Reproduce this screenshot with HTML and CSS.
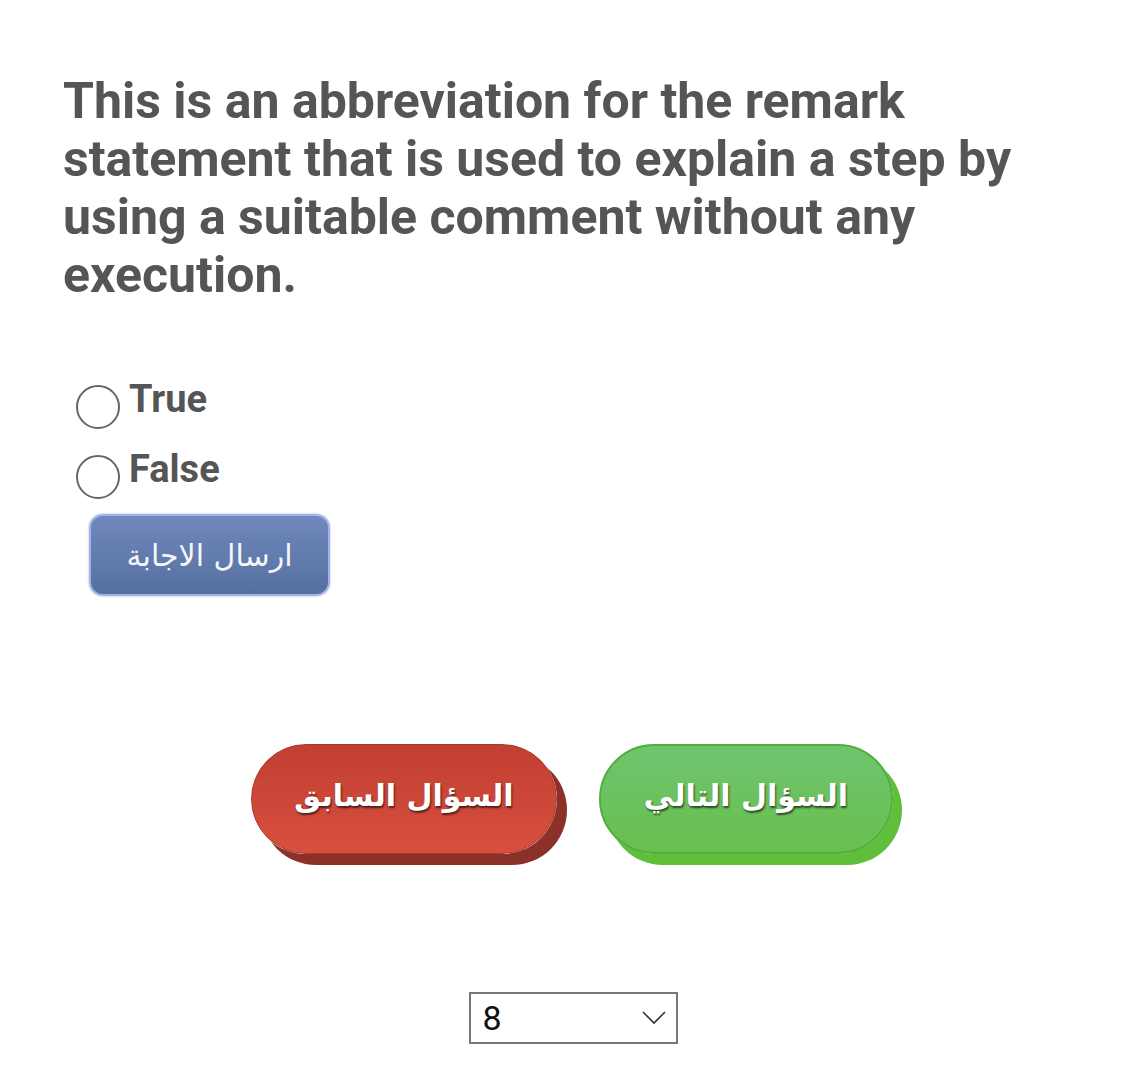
FILE: index.html
```html
<!DOCTYPE html>
<html lang="en">

<head>
 <meta charset="UTF-8">
 <meta name="viewport" content="width=device-width, initial-scale=1.0">
 <title>Quiz Question</title>
 <link rel="stylesheet" href="styles.css">
</head>

<body>
 <div class="quiz">
  <h1 class="question">This is an abbreviation for the remark statement that is used to explain a step by using a suitable comment without any execution.</h1>

  <!-- Answers -->
  <form class="answers">
   <label class="option"><span class="radio"></span>True</label>
   <label class="option"><span class="radio"></span>False</label>
   <button type="button" class="submit" dir="rtl">ارسال الاجابة</button>
  </form>

  <!-- Navigation -->
  <div class="nav">
   <button type="button" class="pill prev" dir="rtl">السؤال السابق</button>
   <button type="button" class="pill next" dir="rtl">السؤال التالي</button>
  </div>

  <div class="jump">
   <div class="select">
    <span>8</span>
    <svg width="24" height="14" viewBox="0 0 24 14"><path d="M1 1 L12 12 L23 1" fill="none" stroke="#333" stroke-width="1.6"/></svg>
   </div>
  </div>
 </div>
</body>

</html>
```

FILE: styles.css
```css
body {
 margin: 0;
 background: #fff;
 font-family: Roboto, "Noto Sans", sans-serif;
 color: #555;
}

.quiz {
 padding-top: 72px;
}

.question {
 margin: 0 60px 0 63px;
 font-size: 50px;
 line-height: 58px;
 font-weight: 700;
 color: #555;
 max-width: 980px;
}

.answers {
 display: flex;
 flex-direction: column;
 align-items: flex-start;
 margin-top: 60px;
 padding-left: 76px;
}

.option {
 display: flex;
 align-items: center;
 gap: 9px;
 height: 70px;
 font-size: 38px;
 font-weight: 700;
 color: #555;
}

.radio {
 width: 40px;
 height: 40px;
 border: 2.5px solid #666;
 border-radius: 50%;
 margin-top: 16px;
}

.submit {
 margin: 10px 0 0 13px;
 width: 241px;
 height: 82px;
 border: 2px solid #a3b3ea;
 border-radius: 14px;
 background: linear-gradient(#7088be, #55709f);
 color: #f4f6fb;
 font-family: "DejaVu Sans", sans-serif;
 font-size: 30px;
 box-shadow: 0 0 2px rgba(60, 80, 140, 0.5);
}

.nav {
 display: flex;
 justify-content: center;
 gap: 42px;
 margin-top: 148px;
}

.pill {
 height: 110px;
 padding-bottom: 8px;
 border-radius: 55px;
 font-family: "DejaVu Sans", sans-serif;
 font-weight: 700;
 font-size: 30px;
 color: #fff;
 text-shadow: 1px 2px 2px rgba(0, 0, 0, 0.6);
}

.prev {
 width: 306px;
 border: 1px solid #a83a2c;
 background: linear-gradient(#c13f31, #d84f3f);
 box-shadow: 10px 11px 0 #8c3127;
}

.next {
 width: 294px;
 border: 2px solid #4fae3f;
 background: linear-gradient(#70c46f, #68bf4d);
 box-shadow: 9px 11px 0 #5fbe3a;
}

.jump {
 display: flex;
 justify-content: center;
 margin-top: 138px;
 padding-left: 2px;
}

.select {
 display: flex;
 align-items: center;
 justify-content: space-between;
 width: 209px;
 height: 52px;
 box-sizing: border-box;
 padding: 0 10px 0 12px;
 border: 2px solid #777;
 font-family: Roboto, sans-serif;
 font-size: 34px;
 color: #111;
}
```
